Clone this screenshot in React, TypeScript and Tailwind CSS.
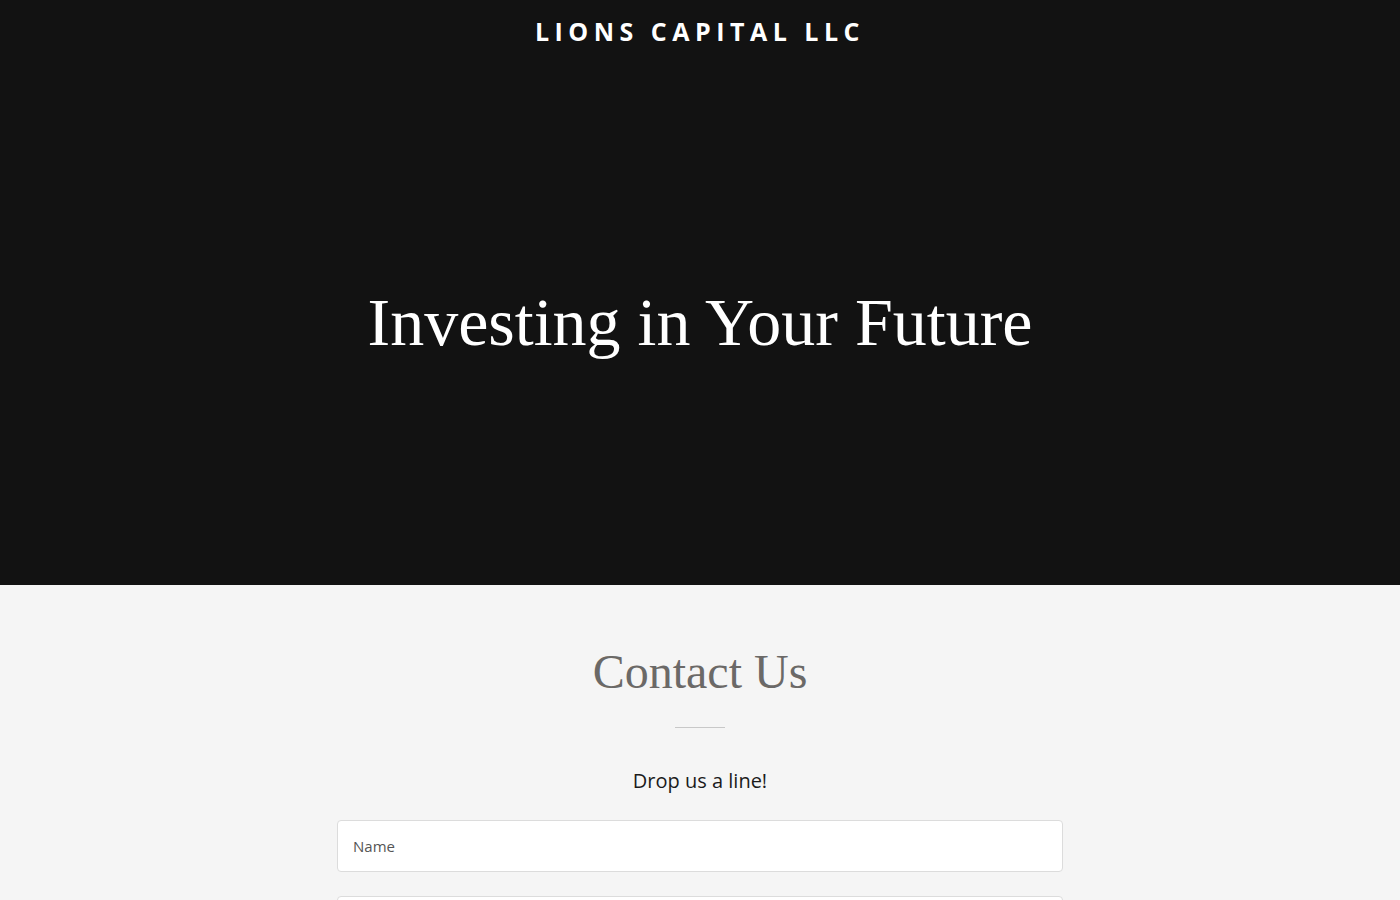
import React from 'react'

const Header = () => (
    <div className="flex justify-center pt-[17px]">
        <h1
            className="text-[25px] font-bold tracking-[0.22em] text-white uppercase leading-[28px]"
            style={{ fontFamily: '"Open Sans", Inter, sans-serif' }}
        >
            Lions Capital LLC
        </h1>
    </div>
)

const Hero = () => (
    <section className="bg-[#121212] h-[585px] flex flex-col">
        <Header />
        <div className="flex-1 flex items-center justify-center pt-[14px]">
            <h2
                className="text-[68px] text-white font-normal leading-none"
                style={{ fontFamily: '"Liberation Serif", serif' }}
            >
                Investing in Your Future
            </h2>
        </div>
    </section>
)

const Field = ({ label }: { label: string }) => (
    <input
        placeholder={label}
        className="w-full h-[52px] bg-white border border-[#dcdcdc] rounded-[4px] px-[15px] text-[15px] text-[#333] placeholder:text-[#555] outline-none"
        style={{ fontFamily: '"Open Sans", sans-serif' }}
    />
)

export default function App() {
    return (
        <div className="min-h-screen bg-[#f5f5f5]">
            <Hero />
            <section className="flex flex-col items-center pt-[63px]">
                <h3
                    className="text-[48px] text-[#6b6967] leading-none"
                    style={{ fontFamily: '"Liberation Serif", serif' }}
                >
                    Contact Us
                </h3>
                <div className="w-[50px] h-px bg-[#c8c8c8] mt-[31px]"></div>
                <p
                    className="mt-[43px] text-[20px] text-[#1b1b1b] leading-none"
                    style={{ fontFamily: '"Open Sans", sans-serif' }}
                >
                    Drop us a line!
                </p>
                <div className="w-[726px] mt-[29px] flex flex-col gap-[24px]">
                    <Field label="Name" />
                    <Field label="Email" />
                </div>
            </section>
        </div>
    )
}
